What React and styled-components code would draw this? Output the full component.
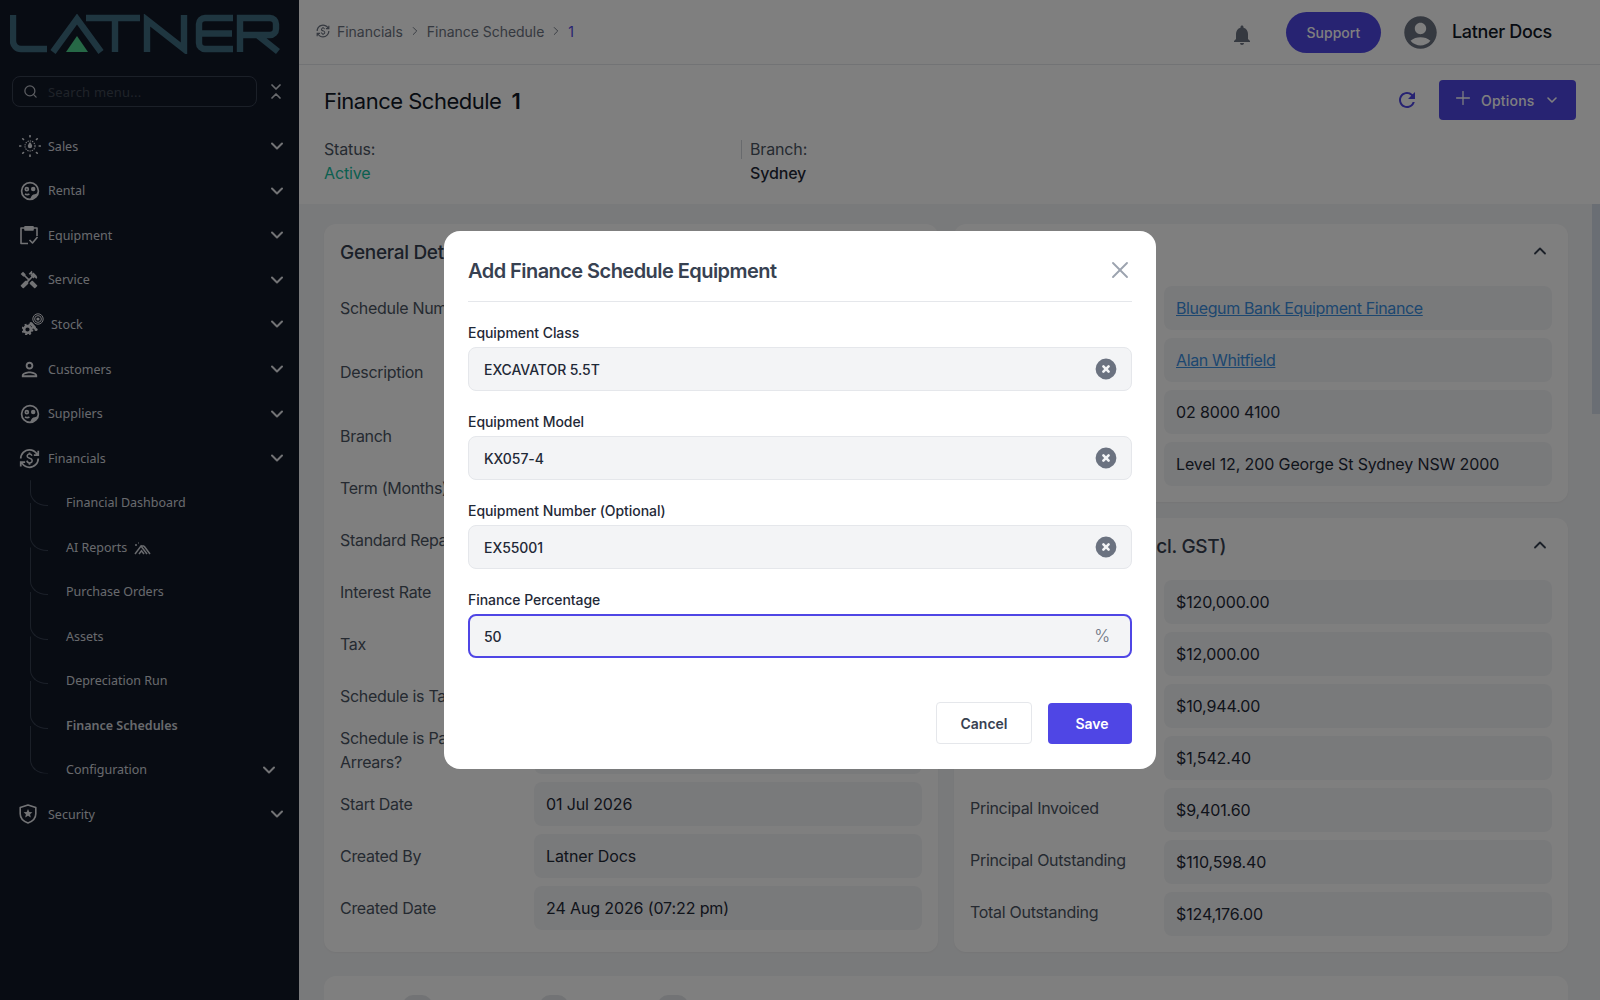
import React from "react";
import styled, { createGlobalStyle } from "styled-components";
import { ChevronDown, ChevronRight, ChevronUp, Search, Plus, X } from "lucide-react";
import { MdHandyman, MdOutlinePerson, MdCurrencyExchange, MdNotifications, MdAccountCircle, MdRefresh } from "react-icons/md";
import { HiXCircle } from "react-icons/hi";

const Global = createGlobalStyle`
  html, body { margin: 0; padding: 0; height: 100%; overflow: hidden; }
  body { font-family: Inter, "Liberation Sans", sans-serif; background: #f3f4f6; color: #111827; }
  * { box-sizing: border-box; }
`;

const Shell = styled.div`display: flex; width: 1600px; height: 1000px; overflow: hidden; position: relative;`;

/* sidebar */
const Sidebar = styled.aside`
  width: 299px; flex: none; background: #111827; font-family: "Noto Sans", sans-serif; display: flex; flex-direction: column;
`;
const LogoWrap = styled.div`height: 76px; padding: 14px 0 0 10px; svg { display: block; }`;
const SearchRow = styled.div`display: flex; align-items: center; padding-left: 12px; gap: 11px; height: 31px; margin-bottom: 17.1px;`;
const SearchBox = styled.div`
  width: 245px; height: 31px; border: 1px solid #374151; border-radius: 8px; display: flex; align-items: center; padding-left: 10px; gap: 10px;
  color: #b8bcc4;
`;
const Placeholder = styled.span`font-size: 13px; color: #3f4753; letter-spacing: .2px;`;
const Collapse = styled.div`display: flex; flex-direction: column; color: #d1d5db; align-items: center; svg { margin: -3.5px 0; }`;
const NavItem = styled.div`
  height: 44.54px; display: flex; align-items: center; padding-left: ${p => p.$pad ?? 19}px; color: #d1d5db; font-size: 12.5px; position: relative;
`;
const NavIcon = styled.span`width: ${p => p.$w ?? 29}px; display: flex; flex: none; color: #e5e7eb;`;
const NavLabel = styled.span`flex: 1;`;
const NavChevron = styled.span`display: flex; color: #e5e7eb; padding-right: ${p => p.$r ?? 12}px;`;
const SubItem = styled.div`
  height: 44.54px; display: flex; align-items: center; padding-left: 66px; font-size: 12.5px; color: #d1d5db; position: relative;
  font-weight: ${p => (p.$active ? 600 : 400)};
  &::before {
    content: ""; position: absolute; left: 30px; top: -22px; height: 47px; width: 17px;
    border-left: 1px solid #374151; border-bottom: 1px solid #374151; border-bottom-left-radius: 17px 14px;
    clip-path: inset(${p => (p.$first ? 22 : 0)}px 0 0 0);
  }
`;
const AiMark = styled.span`display: inline-flex; margin-left: 6px; vertical-align: middle;`;

/* main */
const Main = styled.main`flex: 1; min-width: 0; display: flex; flex-direction: column; position: relative;`;
const Topbar = styled.header`
  height: 65px; flex: none; background: #fff; border-bottom: 1px solid #e5e7eb; display: flex; align-items: center; padding: 0 48px 0 17px;
`;
const Crumbs = styled.nav`display: flex; align-items: center; font-size: 14px; color: #6b7280; flex: 1; letter-spacing: -.03px; padding-bottom: 2px;`;
const CrumbIcon = styled.span`display: flex; margin-right: 7px;`;
const CrumbSep = styled.span`display: flex; margin: 0 5px; color: #6b7280;`;
const CrumbNow = styled.span`color: #4f46e5;`;
const Bell = styled.span`display: flex; color: #6b7280; margin: 5px 32px 0 0;`;
const Support = styled.button`
  width: 95px; height: 41px; border: 0; border-radius: 21px; background: #4f46e5; color: #fff; font: 500 14px Inter, sans-serif; margin-right: 20px;
`;
const Avatar = styled.span`display: flex; color: #6b7280; margin: 0 12px 0 0;`;
const UserName = styled.span`font-size: 18px; font-weight: 500; color: #111827; letter-spacing: -.32px; padding-bottom: 1px;`;

const PageHead = styled.section`height: 139px; flex: none; background: #fff; padding: 15px 24px 0 25px; box-shadow: 0 1px 2px rgba(0,0,0,.05);`;
const HeadTop = styled.div`display: flex; align-items: center; height: 40px; margin-bottom: 17px;`;
const PageTitle = styled.h1`margin: 0; flex: 1; font-size: 22px; font-weight: 400; color: #111827; display: flex; gap: 10px; letter-spacing: -.5px; padding-top: 2px;`;
const TitleNum = styled.span`font-weight: 600;`;
const Refresh = styled.span`display: flex; color: #4f46e5; margin-right: 20px;`;
const OptionsBtn = styled.button`
  width: 137px; height: 40px; border: 0; border-radius: 4px; background: #4f46e5; color: #fff; display: flex; align-items: center; padding: 0 0 0 13px;
  font: 500 14px Inter, sans-serif; letter-spacing: .2px;
`;
const OptPlus = styled.span`display: flex; margin-top: -4px;`;
const OptText = styled.span`margin: 0 9px 0 7px;`;
const Meta = styled.div`display: flex;`;
const MetaCol = styled.div`width: ${p => p.$w}px; font-size: 16px; line-height: 24px; color: #4b5563; position: relative; letter-spacing: -.15px;`;
const MetaValue = styled.div`color: ${p => p.$c}; font-weight: ${p => p.$fw ?? 500};`;
const MetaDivider = styled.span`position: absolute; left: -9px; top: 3px; width: 1px; height: 19px; background: #d1d5db;`;

const Content = styled.div`flex: 1; padding: 20px 32px 0 25px; overflow: hidden; background: #f3f4f6;`;
const Grid = styled.div`display: grid; grid-template-columns: 614px 614px; gap: 16px;`;
const Column = styled.div`display: flex; flex-direction: column; gap: 16px;`;
const Card = styled.section`background: #fff; border-radius: 12px; padding: 0 16px 16px 16px; box-shadow: 0 1px 2px rgba(0,0,0,.04); flex: ${p => (p.$grow ? 1 : "none")};`;
const CardHead = styled.div`height: 56px; margin-bottom: 6px; display: flex; align-items: center; justify-content: space-between; padding: 0 2px 3px 0; color: #374151;`;
const CardTitle = styled.h2`margin: 3px 0 0; font-size: 19px; font-weight: 500; color: #374151; letter-spacing: -.3px;`;
const Rows = styled.div`display: flex; flex-direction: column; gap: 8px;`;
const Row = styled.div`display: grid; grid-template-columns: 194px 1fr; align-items: center; min-height: ${p => p.$h ?? 44}px;`;
const RowLabel = styled.div`font-size: 16px; line-height: 24px; color: #4b5563; padding: 0 10px ${p => (p.$lift ? 4 : 0)}px 0; letter-spacing: -.3px;`;
const RowValue = styled.div`
  height: ${p => p.$h ?? 44}px; background: #f3f4f6; border-radius: 8px; padding: 0 12px; display: flex; align-items: center; font-size: 16px; font-weight: 400; color: #1f2937; letter-spacing: -.12px;
`;
const ValueLink = styled.a`color: #3b8fe0; text-decoration: underline; font-weight: 400; letter-spacing: -.37px;`;
const Tabs = styled.section`margin-top: 24px; height: 80px; background: #fff; border-radius: 12px; padding: 19px 16px; display: flex;`;
const Tab = styled.div`display: flex; gap: 8px; margin-right: 24px;`;
const TabSpace = styled.span`width: ${p => p.$w}px;`;
const TabCount = styled.span`width: ${p => p.$w}px; height: 20px; border-radius: 10px; background: #e5e7eb;`;

const ScrollThumb = styled.div`position: absolute; right: 0; top: 204px; width: 8px; height: 210px; background: #d4dce8;`;

/* modal */
const Overlay = styled.div`position: absolute; inset: 0; background: rgba(0,0,0,.5); display: flex; align-items: center; justify-content: center; z-index: 5;`;
const Modal = styled.div`width: 712px; height: 538px; background: #fff; border-radius: 16px; padding: 0 24px; display: flex; flex-direction: column;`;
const ModalHead = styled.div`height: 71px; flex: none; border-bottom: 1px solid #e5e7eb; display: flex; align-items: center; justify-content: space-between; padding-top: 9px; margin-bottom: 21px;`;
const ModalTitle = styled.h3`margin: 0; font-size: 20px; font-weight: 600; color: #374151; letter-spacing: -.55px;`;
const Close = styled.span`display: flex; color: #9ca3af; margin: -1px -2px 0 0;`;
const Fields = styled.div`display: flex; flex-direction: column; gap: 21px;`;
const Field = styled.div`display: flex; flex-direction: column;`;
const FieldLabel = styled.label`font-size: 14px; font-weight: 500; line-height: 20px; margin-bottom: 4px; color: #1f2937; letter-spacing: -.06px;`;
const InputBox = styled.div`
  height: 44px; border-radius: 8px; background: #f3f4f6; display: flex; align-items: center; justify-content: space-between;
  font-size: 14px; font-weight: 500; color: #1f2937; letter-spacing: -.06px; padding: 0 ${p => (p.$focus ? 14 : 12)}px 0 ${p => (p.$focus ? 14 : 15)}px;
  border: ${p => (p.$focus ? "2px solid #4f46e5" : "1px solid #e5e7eb")};
`;
const ClearIcon = styled.span`display: flex; color: #6b7280;`;
const Suffix = styled.span`font-size: 17px; font-weight: 300; color: #6b7280; margin-right: 6px;`;
const Actions = styled.div`display: flex; justify-content: flex-end; align-items: flex-end; gap: 16px; margin-top: 44px;`;
const CancelBtn = styled.button`width: 96px; height: 42px; background: #fff; border: 1px solid #e5e7eb; border-radius: 4px; font: 600 14px Inter, sans-serif; color: #374151;`;
const SaveBtn = styled.button`width: 84px; height: 41px; background: #4f46e5; border: 0; border-radius: 4px; padding: 0 0 0 4px; font: 600 14px Inter, sans-serif; color: #fff;`;

/* drawn icons */
const LatnerLogo = () => (
  <svg width="272" height="40" viewBox="10 13 272 40" fill="none" stroke="#3e6c80" strokeWidth="6.4">
    <path d="M13 14v26a8 8 0 0 0 8 8h26" />
    <path d="M53 51 77 18l24 33" strokeLinejoin="miter" />
    <path d="M86 17h54M115 17v34" />
    <path d="M147 51V19l37 29V14" />
    <path d="M233 17h-28a6 6 0 0 0-6 6v19a6 6 0 0 0 6 6h28M199 32.5h33" />
    <path d="M240 51V17h30a6 6 0 0 1 6 6v5a6 6 0 0 1-6 6h-30M258 34.5l20 16" />
    <path d="M66 51l11-16 11 16z" fill="#4cd08c" stroke="none" />
  </svg>
);
const SalesIcon = () => (
  <svg width="22" height="22" viewBox="0 0 24 24" fill="none" stroke="currentColor" strokeWidth="1.2">
    <circle cx="12" cy="12" r="5.5" strokeDasharray="1.5 1" />
    <path d="M12 7.5c-1.6 2.2-2.4 3.4-2.4 4.5a2.4 2.4 0 0 0 4.8 0c0-1.1-.8-2.3-2.4-4.5z" stroke="none" fill="currentColor" />
    <path strokeWidth="1.8" strokeLinecap="round" d="M12 .8v1.200M12 22v1.200M.8 12H2M22 12h1.200M4.100 4.100l.8.8M19.100 19.100l.8.8M4.100 19.900l.8-.8M19.100 4.900l.8-.8" />
  </svg>
);
const FaceIcon = () => (
  <svg width="20" height="20" viewBox="0 0 20 20" fill="none" stroke="currentColor" strokeWidth="1.7" style={{ marginLeft: 1 }}>
    <circle cx="10" cy="10" r="8.4" />
    <circle cx="6.8" cy="8.2" r="1.5" />
    <circle cx="13.2" cy="8" r="1.4" fill="currentColor" />
    <path d="M10 18.4c4.6 0 8.4-3.600 8.400-8.200-1 2.400-3 3-5 3.400-1.800.4-2.200 2.800-3.400 4.800z" fill="currentColor" stroke="none" />
    <path d="M5 13c1.400.8 3 .8 4.400 0" />
  </svg>
);
const ClipIcon = () => (
  <svg width="20" height="20" viewBox="0 0 20 20" fill="none" stroke="currentColor" strokeWidth="1.6" strokeLinejoin="round">
    <path d="M6 3H2v15.500h7M14 3h4v8" />
    <path d="M6 1.800h8V5H6z" fill="currentColor" />
    <path d="M10.500 15l3 3 5-6" />
  </svg>
);
const StockIcon = () => (
  <svg width="22" height="22" viewBox="0 0 22 22" fill="none" stroke="currentColor">
    <circle cx="5.5" cy="16.5" r="3.4" strokeWidth="2.6" />
    <circle cx="5.5" cy="16.5" r="5" strokeWidth="1.8" strokeDasharray="2 2" />
    <circle cx="16" cy="6" r="1.6" fill="currentColor" strokeWidth="0" />
    <circle cx="16" cy="6" r="3.4" strokeWidth="1" />
    <circle cx="16" cy="6" r="5.2" strokeWidth="1" />
    <path d="M9 10.500l3.500 4" strokeWidth="3" strokeLinecap="round" />
    <circle cx="14" cy="16.5" r="1.6" fill="currentColor" strokeWidth="0" />
  </svg>
);
const ShieldIcon = () => (
  <svg width="18" height="20" viewBox="0 0 18 20" fill="none" stroke="currentColor" strokeWidth="1.6" strokeLinejoin="round">
    <path d="M9 1 1.200 3.600v6.200c0 4.200 3.200 7.600 7.800 9.200 4.600-1.600 7.800-5 7.800-9.200V3.600z" />
    <path d="m9 5 1.300 2.900 3.100.3-2.300 2.100.7 3.100L9 11.800l-2.800 1.600.7-3.100-2.300-2.100 3.100-.3z" fill="currentColor" stroke="none" />
  </svg>
);
const AiIcon = () => (
  <svg width="20" height="13" viewBox="0 0 20 13" fill="none" stroke="currentColor" strokeWidth="1.5">
    <path d="M2 12 8 4l6 8M6 12l2.500-3.300L11 12" />
    <path d="M11 4l6 8M8 4h3" />
    <path d="M2 3h2M3 2v2M5.500.5v1" strokeWidth="1" />
  </svg>
);

const navTop = [
  ["Sales", <SalesIcon />],
  ["Rental", <FaceIcon />],
  ["Equipment", <ClipIcon />],
  ["Service", <MdHandyman size={20} />],
];
const navMid = [
  ["Customers", <MdOutlinePerson size={23} style={{ margin: "0 0 0 -1px" }} />],
  ["Suppliers", <FaceIcon />],
  ["Financials", <MdCurrencyExchange size={21} />],
];
const subs = ["Financial Dashboard", "AI Reports", "Purchase Orders", "Assets", "Depreciation Run", "Finance Schedules", "Configuration"];

const leftRows = [
  ["Schedule Number", ""],
  ["Description", "", 68],
  ["Branch", ""],
  ["Term (Months)", ""],
  ["Standard Repayment", ""],
  ["Interest Rate", ""],
  ["Tax", ""],
  ["Schedule is Taxable?", ""],
  ["Schedule is Paid in Arrears?", "", 48],
  ["Start Date", "01 Jul 2026"],
  ["Created By", "Latner Docs"],
  ["Created Date", "24 Aug 2026 (07:22 pm)"],
];
const finance = [
  ["Financed Amount", "$120,000.00"],
  ["GST", "$12,000.00"],
  ["Total Invoiced", "$10,944.00"],
  ["Interest Invoiced", "$1,542.40"],
  ["Principal Invoiced", "$9,401.60"],
  ["Principal Outstanding", "$110,598.40"],
  ["Total Outstanding", "$124,176.00"],
];
const fields = [
  ["Equipment Class", "EXCAVATOR 5.5T"],
  ["Equipment Model", "KX057-4"],
  ["Equipment Number (Optional)", "EX55001"],
];

const Chevron = ({ r }) => (
  <NavChevron $r={r}><ChevronDown size={20} strokeWidth={2.4} /></NavChevron>
);

export default function App() {
  return (
    <Shell>
      <Global />
      <Sidebar>
        <LogoWrap><LatnerLogo /></LogoWrap>
        <SearchRow>
          <SearchBox>
            <Search size={15} strokeWidth={2} />
            <Placeholder>Search menu...</Placeholder>
          </SearchBox>
          <Collapse>
            <ChevronDown size={16} strokeWidth={2.6} />
            <ChevronUp size={16} strokeWidth={2.6} />
          </Collapse>
        </SearchRow>
        {navTop.map(([label, icon]) => (
          <NavItem key={label}><NavIcon>{icon}</NavIcon><NavLabel>{label}</NavLabel><Chevron /></NavItem>
        ))}
        <NavItem $pad={22}><NavIcon $w={29}><StockIcon /></NavIcon><NavLabel>Stock</NavLabel><Chevron /></NavItem>
        {navMid.map(([label, icon]) => (
          <NavItem key={label}><NavIcon>{icon}</NavIcon><NavLabel>{label}</NavLabel><Chevron /></NavItem>
        ))}
        {subs.map((label, i) => (
          <SubItem key={label} $first={i === 0} $active={label === "Finance Schedules"}>
            <NavLabel>
              {label}
              {label === "AI Reports" && <AiMark><AiIcon /></AiMark>}
            </NavLabel>
            {label === "Configuration" && <Chevron r={20} />}
          </SubItem>
        ))}
        <NavItem><NavIcon><ShieldIcon /></NavIcon><NavLabel>Security</NavLabel><Chevron /></NavItem>
      </Sidebar>
      <Main>
        <Topbar>
          <Crumbs>
            <CrumbIcon><MdCurrencyExchange size={14} /></CrumbIcon>
            Financials
            <CrumbSep><ChevronRight size={14} strokeWidth={1.6} /></CrumbSep>
            Finance Schedule
            <CrumbSep><ChevronRight size={14} strokeWidth={1.6} /></CrumbSep>
            <CrumbNow>1</CrumbNow>
          </Crumbs>
          <Bell><MdNotifications size={24} /></Bell>
          <Support>Support</Support>
          <Avatar><MdAccountCircle size={39} /></Avatar>
          <UserName>Latner Docs</UserName>
        </Topbar>
        <PageHead>
          <HeadTop>
            <PageTitle>Finance Schedule <TitleNum>1</TitleNum></PageTitle>
            <Refresh><MdRefresh size={24} /></Refresh>
            <OptionsBtn>
              <OptPlus><Plus size={22} strokeWidth={1.4} /></OptPlus>
              <OptText>Options</OptText>
              <ChevronDown size={16} strokeWidth={2.4} />
            </OptionsBtn>
          </HeadTop>
          <Meta>
            <MetaCol $w={426}>Status:<MetaValue $c="#16c0a0" $fw={400}>Active</MetaValue></MetaCol>
            <MetaCol $w={300}><MetaDivider />Branch:<MetaValue $c="#1f2937">Sydney</MetaValue></MetaCol>
          </Meta>
        </PageHead>
        <Content>
          <Grid>
            <Column>
              <Card $grow>
                <CardHead><CardTitle>General Details</CardTitle></CardHead>
                <Rows>
                  {leftRows.map(([l, v, h]) => (
                    <Row key={l} $h={h}><RowLabel>{l}</RowLabel><RowValue $h={h}>{v}</RowValue></Row>
                  ))}
                </Rows>
              </Card>
            </Column>
            <Column>
              <Card>
                <CardHead><CardTitle>Financier Details</CardTitle><ChevronUp size={20} strokeWidth={2.2} /></CardHead>
                <Rows>
                  <Row><RowLabel>Financier</RowLabel><RowValue><ValueLink>Bluegum Bank Equipment Finance</ValueLink></RowValue></Row>
                  <Row><RowLabel>Contact</RowLabel><RowValue><ValueLink>Alan Whitfield</ValueLink></RowValue></Row>
                  <Row><RowLabel>Phone</RowLabel><RowValue>02 8000 4100</RowValue></Row>
                  <Row><RowLabel>Address</RowLabel><RowValue>Level 12, 200 George St Sydney NSW 2000</RowValue></Row>
                </Rows>
              </Card>
              <Card>
                <CardHead><CardTitle>Finance Summary (incl. GST)</CardTitle><ChevronUp size={20} strokeWidth={2.2} /></CardHead>
                <Rows>
                  {finance.map(([l, v]) => (
                    <Row key={l}><RowLabel $lift>{l}</RowLabel><RowValue>{v}</RowValue></Row>
                  ))}
                </Rows>
              </Card>
            </Column>
          </Grid>
          <Tabs>
            <Tab><TabSpace $w={55} /><TabCount $w={29} /></Tab>
            <Tab><TabSpace $w={76} /><TabCount $w={28} /></Tab>
            <Tab><TabSpace $w={58} /><TabCount $w={30} /></Tab>
          </Tabs>
        </Content>
        <ScrollThumb />
      </Main>
      <Overlay>
        <Modal>
          <ModalHead>
            <ModalTitle>Add Finance Schedule Equipment</ModalTitle>
            <Close><X size={28} strokeWidth={1.6} /></Close>
          </ModalHead>
          <Fields>
            {fields.map(([l, v]) => (
              <Field key={l}>
                <FieldLabel>{l}</FieldLabel>
                <InputBox>{v}<ClearIcon><HiXCircle size={26} /></ClearIcon></InputBox>
              </Field>
            ))}
            <Field>
              <FieldLabel>Finance Percentage</FieldLabel>
              <InputBox $focus>50<Suffix>%</Suffix></InputBox>
            </Field>
          </Fields>
          <Actions>
            <CancelBtn>Cancel</CancelBtn>
            <SaveBtn>Save</SaveBtn>
          </Actions>
        </Modal>
      </Overlay>
    </Shell>
  );
}
